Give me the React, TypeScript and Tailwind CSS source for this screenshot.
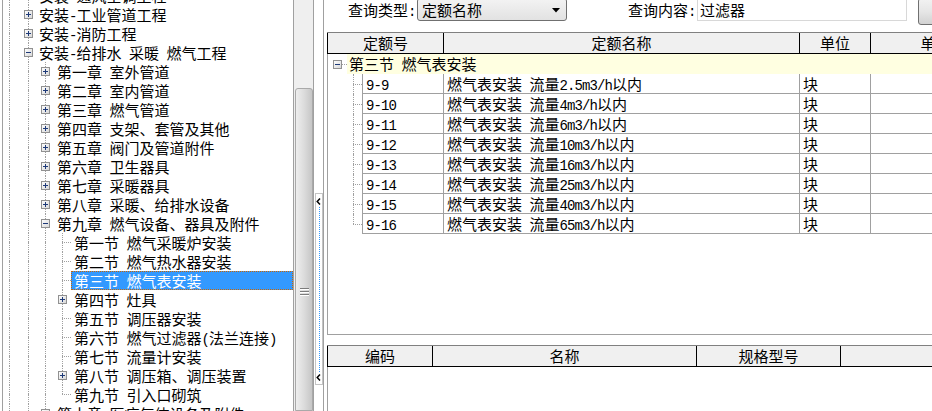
import React from "react";

// half-width runs (digits, latin, spaces) get a narrow mono face, like SimSun's half-width glyphs
function Mixed({ s }: { s: string }) {
  const parts = s.split(/([\x20-\x7e]+)/);
  return (
    <>
      {parts.map((p, i) =>
        /^[\x20-\x7e]+$/.test(p) ? (
          <span key={i} className="font-['Liberation_Mono',monospace] text-[14px] tracking-[-0.9px]">
            {p}
          </span>
        ) : (
          <React.Fragment key={i}>{p}</React.Fragment>
        )
      )}
    </>
  );
}

const dot = "border-dotted border-[#a0a0a0]";

function Box({ minus }: { minus?: boolean }) {
  return (
    <svg width="9" height="9" viewBox="0 0 9 9" className="block shrink-0" shapeRendering="crispEdges">
      <defs>
        <linearGradient id="bx" x1="0" y1="0" x2="1" y2="1">
          <stop offset="0" stopColor="#ffffff" />
          <stop offset="1" stopColor="#d6d6d6" />
        </linearGradient>
      </defs>
      <rect x="0.5" y="0.5" width="8" height="8" fill="url(#bx)" stroke="#919191" />
      <path d="M2 4.5h5" stroke="#1e3a78" />
      {!minus && <path d="M4.5 2v5" stroke="#1e3a78" />}
    </svg>
  );
}

type Mid = "line" | "plus" | "minus" | "stub";

// one indent column of the tree, with its dotted guide
function Guide({ w, line, box, up, down, mid }: { w: string; line: string; box: string; up: boolean; down: boolean; mid: Mid }) {
  return (
    <div className={`${w} h-full shrink-0 flex flex-col`}>
      <div className={`${line} flex-1 ${up ? `border-l ${dot}` : ""}`} />
      {mid === "plus" || mid === "minus" ? (
        <div className={`${box} h-[9px] flex`}>
          <Box minus={mid === "minus"} />
        </div>
      ) : mid === "stub" ? (
        <div className={`${line} h-px border-t ${dot}`} />
      ) : (
        <div className={`${line} h-px border-l ${dot}`} />
      )}
      <div className={`${line} flex-1 ${down ? `border-l ${dot}` : ""}`} />
    </div>
  );
}

type Row = { t: string; l: 0 | 1 | 2; b?: "+" | "-"; last?: boolean; sel?: boolean };

const rows: Row[] = [
  { t: "安装-通风空调工程", l: 0, b: "+" },
  { t: "安装-工业管道工程", l: 0, b: "+" },
  { t: "安装-消防工程", l: 0, b: "+" },
  { t: "安装-给排水 采暖 燃气工程", l: 0, b: "-" },
  { t: "第一章 室外管道", l: 1, b: "+" },
  { t: "第二章 室内管道", l: 1, b: "+" },
  { t: "第三章 燃气管道", l: 1, b: "+" },
  { t: "第四章 支架、套管及其他", l: 1, b: "+" },
  { t: "第五章 阀门及管道附件", l: 1, b: "+" },
  { t: "第六章 卫生器具", l: 1, b: "+" },
  { t: "第七章 采暖器具", l: 1, b: "+" },
  { t: "第八章 采暖、给排水设备", l: 1, b: "+" },
  { t: "第九章 燃气设备、器具及附件", l: 1, b: "-" },
  { t: "第一节 燃气采暖炉安装", l: 2 },
  { t: "第二节 燃气热水器安装", l: 2 },
  { t: "第三节 燃气表安装", l: 2, sel: true },
  { t: "第四节 灶具", l: 2, b: "+" },
  { t: "第五节 调压器安装", l: 2 },
  { t: "第六节 燃气过滤器(法兰连接)", l: 2 },
  { t: "第七节 流量计安装", l: 2 },
  { t: "第八节 调压箱、调压装置", l: 2, b: "+" },
  { t: "第九节 引入口砌筑", l: 2, last: true },
  { t: "第十章 医疗气体设备及附件", l: 1, b: "+" },
];

function TreeRow({ r }: { r: Row }) {
  const own: Mid = r.b === "+" ? "plus" : r.b === "-" ? "minus" : "stub";
  return (
    <div className="h-[19px] flex items-stretch">
      <Guide w="w-[16px]" line="ml-[6px]" box="ml-[2px]" up down mid="line" />
      <Guide w="w-[18px]" line="ml-[9px]" box="ml-[5px]" up down mid={r.l === 0 ? own : "line"} />
      {r.l >= 1 && <Guide w="w-[17px]" line="ml-[8px]" box="ml-[4px]" up down mid={r.l === 1 ? own : "line"} />}
      {r.l === 2 && <Guide w="w-[17px]" line="ml-[8px]" box="ml-[4px]" up down={!r.last} mid={own} />}
      {r.sel ? (
        <div className="flex-1 bg-[#3399ff] border border-dotted border-[#cc6600] pl-[2px] leading-[17px] text-white whitespace-pre">
          <Mixed s={r.t} />
        </div>
      ) : (
        <div className={`flex-1 leading-[19px] whitespace-pre ${r.l === 0 ? "pl-[2px]" : "pl-[3px]"}`}>
          <Mixed s={r.t} />
        </div>
      )}
    </div>
  );
}

const items = [
  ["9-9", "燃气表安装 流量2.5m3/h以内"],
  ["9-10", "燃气表安装 流量4m3/h以内"],
  ["9-11", "燃气表安装 流量6m3/h以内"],
  ["9-12", "燃气表安装 流量10m3/h以内"],
  ["9-13", "燃气表安装 流量16m3/h以内"],
  ["9-14", "燃气表安装 流量25m3/h以内"],
  ["9-15", "燃气表安装 流量40m3/h以内"],
  ["9-16", "燃气表安装 流量65m3/h以内"],
];

const head = "h-full shrink-0 border-r border-black text-center leading-[20px]";
const cell = "h-full shrink-0 border-r border-b border-[#a0a0a0] pl-[3px] leading-[19px] whitespace-pre";

export default function App() {
  return (
    <div className="w-[932px] h-[411px] overflow-hidden bg-white flex font-['Noto_Sans_CJK_SC',sans-serif] text-[15px] text-black">
      {/* tree */}
      <div className="w-[294px] h-full shrink-0 pl-[2px] flex">
        <div className="flex-1 h-full border-l border-r border-[#a0a0a0] overflow-hidden">
          <div className="-mt-[14px]">
            {rows.map((r, i) => (
              <TreeRow key={i} r={r} />
            ))}
          </div>
        </div>
      </div>

      {/* scrollbar */}
      <div className="w-[19px] h-full shrink-0 bg-[#efefef] flex flex-col pt-[88px]">
        <div className="flex-1 ml-[1px] border border-[#a9a9a9] rounded-t-[3px] bg-gradient-to-r from-[#eeeeee] via-[#dcdcdc] to-[#c6c6c6] flex flex-col items-center pt-[199px]">
          <div className="w-[9px] h-px bg-[#7c7c7c]" />
          <div className="w-[9px] h-px bg-white" />
          <div className="w-[9px] h-px bg-[#7c7c7c] mt-[1px]" />
          <div className="w-[9px] h-px bg-white" />
          <div className="w-[9px] h-px bg-[#7c7c7c] mt-[1px]" />
          <div className="w-[9px] h-px bg-white" />
        </div>
      </div>
      <div className="w-px h-full shrink-0 bg-[#a0a0a0]" />

      {/* splitter */}
      <div className="w-[9px] h-full shrink-0 pt-[193px]">
        <div className="ml-[1px] w-[8px] h-[192px] border border-[#c4c4c4] flex flex-col">
          <svg width="6" height="7" viewBox="0 0 6 7" className="mt-[4px] shrink-0">
            <path d="M4 0.5 L1.2 3.5 L4 6.5" fill="none" stroke="#000" strokeWidth="1.5" />
          </svg>
          <div className="flex-1 ml-[3px] my-[2px] border-l border-dotted border-[#3399ff]" />
          <svg width="6" height="7" viewBox="0 0 6 7" className="mb-[3px] shrink-0">
            <path d="M4 0.5 L1.2 3.5 L4 6.5" fill="none" stroke="#000" strokeWidth="1.5" />
          </svg>
        </div>
      </div>
      <div className="w-px h-full shrink-0 bg-[#a0a0a0]" />

      {/* right side */}
      <div className="flex-1 min-w-0 h-full overflow-hidden flex flex-col pl-[3px]">
        <div className="-mt-[2px] h-[27px] shrink-0 flex items-start pl-[21px]">
          <div className="w-[69px] h-[23px] leading-[23px] shrink-0 whitespace-pre">
            <Mixed s="查询类型:" />
          </div>
          <div className="w-[150px] h-[23px] shrink-0 border border-[#707070] rounded-[3px] bg-gradient-to-b from-[#f3f3f3] to-[#e2e2e2] flex items-center pl-[4px] pr-[6px]">
            <span className="leading-[21px]">定额名称</span>
            <svg width="8" height="5" viewBox="0 0 8 5" className="ml-auto mt-[1px]">
              <polygon points="0,0 8,0 4,4.5" fill="#000" />
            </svg>
          </div>
          <div className="ml-[61px] w-[69px] h-[23px] leading-[23px] shrink-0 whitespace-pre">
            <Mixed s="查询内容:" />
          </div>
          <div className="w-[210px] h-[23px] shrink-0 border border-[#d8d8d8] pl-[2px] leading-[21px]">过滤器</div>
          <div className="ml-[11px] w-[60px] h-[27px] shrink-0 border border-[#707070] rounded-[3px] bg-gradient-to-b from-[#f2f2f2] via-[#e6e6e6] to-[#d2d2d2]" />
        </div>

        {/* quota table */}
        <div className="mt-[7px] w-[674px] h-[303px] shrink-0 flex flex-col border-t border-[#808080]">
          <div className="h-[21px] shrink-0 flex border-l border-b border-black bg-[#f0f0f0]">
            <div className={`${head} w-[116px]`}>定额号</div>
            <div className={`${head} w-[356px]`}>定额名称</div>
            <div className={`${head} w-[71px]`}>单位</div>
            <div className={`${head} w-[130px]`}>单价</div>
          </div>
          <div className="flex-1 border-l border-b border-[#a0a0a0] flex flex-col">
            <div className="h-[20px] shrink-0 flex">
              <div className="w-[19px] h-full shrink-0 flex items-center">
                <div className="ml-[5px]">
                  <Box minus />
                </div>
                <div className="flex-1 h-px border-t border-dotted border-[#a0a0a0]" />
              </div>
              <div className="flex-1 bg-[#ffffe1] pl-[2px] leading-[20px] whitespace-pre">
                <Mixed s="第三节 燃气表安装" />
              </div>
            </div>
            {items.map(([code, name], i) => (
              <div key={code} className="h-[20px] shrink-0 flex">
                <Guide w="w-[34px]" line="ml-[25px]" box="ml-[21px]" up down={i < items.length - 1} mid="stub" />
                <div className={`${cell} w-[82px] border-l`}>
                  <Mixed s={code} />
                </div>
                <div className={`${cell} w-[356px]`}>
                  <Mixed s={name} />
                </div>
                <div className={`${cell} w-[71px]`}>块</div>
                <div className={`${cell} w-[130px] border-r-0`} />
              </div>
            ))}
          </div>
        </div>

        {/* material table */}
        <div className="mt-[10px] w-[780px] flex-1 flex flex-col border-t border-[#808080]">
          <div className="h-[21px] shrink-0 flex border-l border-b border-black bg-[#f0f0f0]">
            <div className={`${head} w-[105px]`}>编码</div>
            <div className={`${head} w-[264px]`}>名称</div>
            <div className={`${head} w-[144px]`}>规格型号</div>
            <div className={`${head} w-[260px]`}>单位</div>
          </div>
          <div className="flex-1 border-l border-[#a0a0a0]" />
        </div>
      </div>
    </div>
  );
}
